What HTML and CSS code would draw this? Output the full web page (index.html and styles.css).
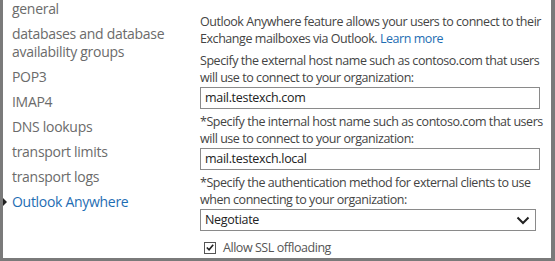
FILE: index.html
```html
<!DOCTYPE html>
<html>
<head>
<meta charset="utf-8">
<link rel="stylesheet" href="styles.css">
</head>
<body>
<div class="frame">
  <nav class="nav">
    <ul class="nav-list">
      <li class="nav-item">general</li>
      <li class="nav-item">databases and database availability groups</li>
      <li class="nav-item">POP3</li>
      <li class="nav-item">IMAP4</li>
      <li class="nav-item">DNS lookups</li>
      <li class="nav-item">transport limits</li>
      <li class="nav-item">transport logs</li>
      <li class="nav-item active">Outlook Anywhere</li>
    </ul>
  </nav>
  <main class="content">
    <p class="para">Outlook Anywhere feature allows your users to connect to their Exchange mailboxes via Outlook. <a class="link" href="#">Learn more</a></p>
    <p class="label">Specify the external host name such as contoso.com that users will use to connect to your organization:</p>
    <div class="field">mail.testexch.com</div>
    <p class="label">*Specify the internal host name such as contoso.com that users will use to connect to your organization:</p>
    <div class="field">mail.testexch.local</div>
    <p class="label">*Specify the authentication method for external clients to use when connecting to your organization:</p>
    <div class="select">
      <span>Negotiate</span>
      <svg class="chev" width="14" height="9" viewBox="0 0 14 9"><path d="M1.5 1.5 L7 7 L12.5 1.5" fill="none" stroke="#222" stroke-width="2"/></svg>
    </div>
    <label class="check">
      <span class="box"><svg width="11" height="11" viewBox="0 0 11 11"><path d="M2 5.5 L4.5 8 L9 2.5" fill="none" stroke="#222" stroke-width="1.8"/></svg></span>
      <span>Allow SSL offloading</span>
    </label>
  </main>
</div>
</body>
</html>
```

FILE: styles.css
```css
* { box-sizing: border-box; }
html, body { margin: 0; padding: 0; background: #fff; }
body {
  font-family: "Open Sans", "Noto Sans", sans-serif;
  width: 555px;
  height: 261px;
  overflow: hidden;
}
.frame {
  width: 555px;
  height: 261px;
  border-left: 3px solid #7a7a7a;
  border-right: 4px solid #7a7a7a;
  border-bottom: 3px solid #7a7a7a;
  display: flex;
  overflow: hidden;
}
.nav {
  width: 187px;
  flex: none;
  overflow: hidden;
}
.nav-list {
  list-style: none;
  margin: 0;
  padding: 0 0 0 9px;
  display: flex;
  flex-direction: column;
  gap: 7px;
}
.nav-item {
  font-size: 14px;
  letter-spacing: -0.3px;
  line-height: 18px;
  color: #6b6b6b;
  position: relative;
}
.nav-item.active {
  color: #1e6db3;
}
.nav-item.active::before {
  content: "";
  position: absolute;
  left: -9px;
  top: 5px;
  border-left: 4px solid #222;
  border-top: 4px solid transparent;
  border-bottom: 4px solid transparent;
}
.content {
  flex: 1;
  padding: 13px 2px 0 10px;
  font-size: 12.5px;
  letter-spacing: -0.45px;
  line-height: 17px;
  color: #444;
}
.para, .label { margin: 0; }
.para { margin-bottom: 5px; }
.label { margin-top: 4px; margin-bottom: 1px; }
.link { color: #1e6db3; text-decoration: none; }
.field, .select {
  width: 340px;
  height: 22px;
  border: 1px solid #8a8a8a;
  padding: 0 4px;
  line-height: 20px;
  color: #222;
  font-size: 12.5px;
  letter-spacing: -0.3px;
}
.select {
  width: 336px;
  display: flex;
  align-items: center;
  justify-content: space-between;
  padding-right: 5px;
}
.check {
  display: flex;
  align-items: center;
  gap: 7px;
  margin-top: 8px;
  padding-left: 4px;
  color: #555;
}
.box {
  width: 12px;
  height: 12px;
  border: 1px solid #555;
  display: flex;
  align-items: center;
  justify-content: center;
}
.box svg { display: block; }
```
